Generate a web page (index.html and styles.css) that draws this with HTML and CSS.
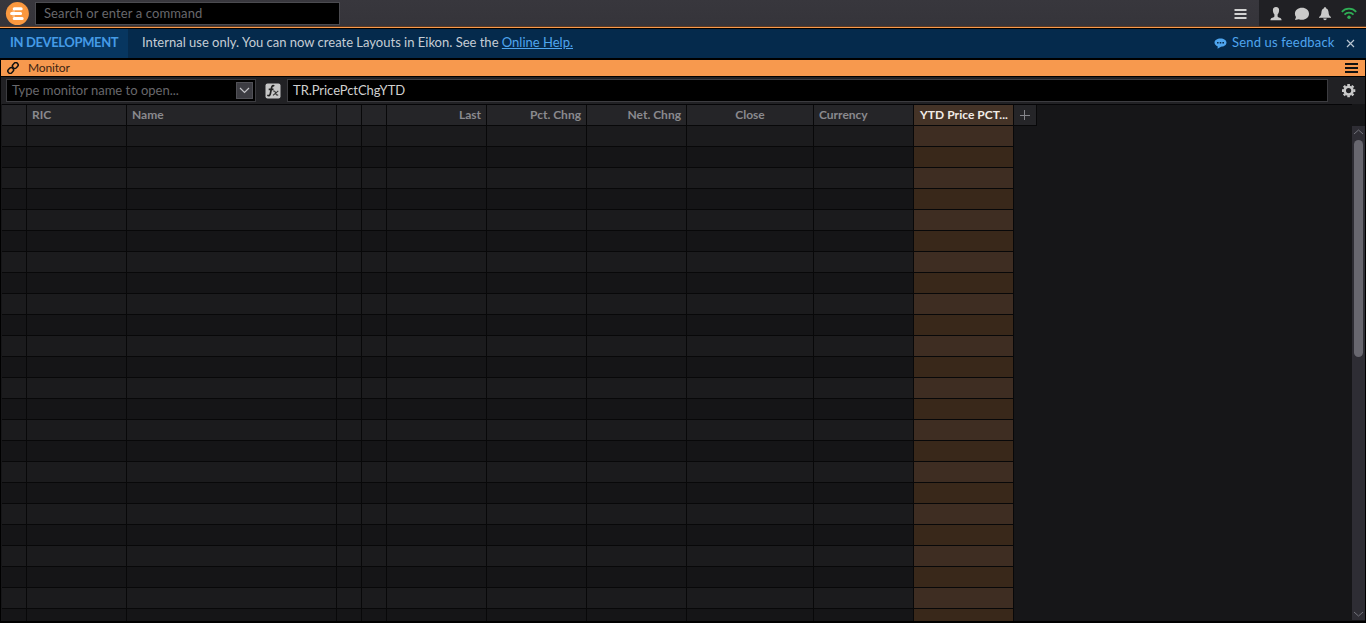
FILE: index.html
```html
<!DOCTYPE html>
<html lang="en">
<head>
<meta charset="utf-8">
<title>Monitor</title>
<link rel="stylesheet" href="styles.css">
</head>
<body>
<div class="app">
  <header class="topbar">
    <svg class="logo" width="24" height="24" viewBox="0 0 24 24"><circle cx="12.400" cy="11.600" r="11.500" fill="#fa983f"/><path d="M9.200 6.800h7M6.600 11.600h9M9.200 16.400h8" stroke="#fff" stroke-width="3" stroke-linecap="round"/><path d="M7.400 8.100h2.500v7H7.400z" fill="#fff" opacity=".35"/></svg>
    <div class="search"><span class="search-text">Search or enter a command</span></div>
    <div class="menu">
      <svg width="13" height="10" viewBox="0 0 13 10"><path d="M.5 1h12M.5 5h12M.5 9h12" stroke="#d2d2d2" stroke-width="2"/></svg>
    </div>
    <div class="status">
      <svg width="12" height="14" viewBox="0 0 12 14"><path d="M6 0C3.8 0 2.8 1.4 2.9 3.4 3 5.3 3.7 6.6 4.4 7.4v2.2C4.2 10.700.4 10.500.4 13.200h11.200C11.600 10.500 7.800 10.700 7.600 9.600V7.400C8.300 6.600 9 5.300 9.100 3.400 9.200 1.400 8.200 0 6 0z" fill="#cacaca"/></svg>
      <svg class="chat" width="16" height="14" viewBox="0 0 16 14"><path d="M8 .8c4 0 7 2.500 7 6s-3 6-7 6c-1.200 0-2.300-.2-3.200-.6L1 12.900l1-2.900C1.300 9 .9 8 .9 6.800.9 3.300 4 .8 8 .8z" fill="#cacaca"/></svg>
      <svg class="bell" width="14" height="14" viewBox="0 0 14 14"><path d="M7 .3c.8 0 1.200.5 1.200 1.100 1.700.6 2.300 2 2.400 4.100.1 2.300.8 3.600 2.400 4.500v.7H1V10c1.600-.9 2.300-2.200 2.400-4.500.1-2.100.7-3.500 2.400-4.100C5.800.8 6.200.3 7 .3zM5.200 11.600h3.600C8.600 12.600 7.900 13.200 7 13.200s-1.600-.6-1.800-1.600z" fill="#cacaca"/></svg>
      <svg class="wifi" width="16" height="13" viewBox="0 0 16 13" fill="none" stroke="#2fae55" stroke-width="1.700"><path d="M.8 4.800C4.800.5 11.200.5 15.200 4.800M3.500 7.600c2.500-2.700 6.500-2.700 9 0"/><circle cx="8" cy="10.200" r="1.700" fill="#2fae55" stroke="none"/></svg>
    </div>
  </header>
  <div class="accent"></div>

  <div class="banner">
    <div class="tag"><span class="tag-text">IN DEVELOPMENT</span></div>
    <p class="notice">Internal use only. You can now create Layouts in Eikon. See the <a href="#">Online Help.</a></p>
    <svg class="bubble" width="13" height="11" viewBox="0 0 13 11"><path d="M6.500.4c3.500 0 6 1.800 6 4.200s-2.500 4.200-5.500 4.200L3.500 10.800l.3-2.400C1.800 7.700.5 6.400.5 4.600.5 2.200 3 .4 6.500.4z" fill="#4fa5ee"/><path d="M3 4h1.600v1.500H3zM5.700 4h1.600v1.500H5.700zM8.400 4H10v1.500H8.400z" fill="#052a4c"/></svg>
    <span class="feedback">Send us feedback</span>
    <svg class="close" width="9" height="9" viewBox="0 0 9 9"><path d="M1 1l7 7M8 1L1 8" stroke="#b9c6d2" stroke-width="1.200"/></svg>
  </div>

  <main class="panel">
    <div class="titlebar">
      <svg class="link" width="12" height="12" viewBox="0 0 12 12" fill="none" stroke="#111" stroke-width="1.500"><rect x="5.300" y="1.200" width="6" height="4.600" rx="2.200" transform="rotate(-45 8.300 3.500)"/><rect x=".7" y="6.200" width="6" height="4.600" rx="2.200" transform="rotate(-45 3.700 8.500)"/></svg>
      <span class="title">Monitor</span>
      <svg class="burger" width="13" height="10" viewBox="0 0 13 10"><path d="M0 1h13M0 5h13M0 9h13" stroke="#111" stroke-width="2"/></svg>
    </div>

    <div class="toolbar">
      <div class="combo"><span class="combo-text">Type monitor name to open...</span><span class="drop"><svg width="11" height="7" viewBox="0 0 11 7"><path d="M1 1l4.500 4.500L10 1" fill="none" stroke="#c4c4c8" stroke-width="1.200"/></svg></span></div>
      <svg class="fx" width="16" height="16" viewBox="0 0 16 16"><rect x=".5" y=".5" width="15" height="15" rx="2" fill="#c7c7c7"/><path d="M9.300 3C7.200 2 6.700 3.800 6.300 6L5.400 10.500C5 12.600 4 13 2.300 12.300M3.700 6.300h4.800" fill="none" stroke="#222" stroke-width="1.700"/><path d="M8.200 8.200c1.600-.8 2 .6 2.500 2s1 2.500 2.500 1.500M13.300 7.900L8 12.400" fill="none" stroke="#333" stroke-width="1.100"/></svg>
      <div class="formula"><span class="formula-text">TR.PricePctChgYTD</span></div>
      <svg class="gear" width="14" height="14" viewBox="0 0 14 14" fill="none" stroke="#cacaca"><circle cx="6.600" cy="6.600" r="3.900" stroke-width="2.600"/><path transform="translate(-.4 -.4)" d="M7 .4v2M7 11.700v2M.4 7h2M11.700 7h2M2.260 2.260l1.400 1.400M10.340 10.340l1.400 1.400M11.740 2.260l-1.400 1.400M3.660 10.340l-1.400 1.400" stroke-width="2.600"/></svg>
    </div>

    <div class="workspace">
      <div class="grid">
        <div class="row head">
          <div></div><div><span>RIC</span></div><div><span>Name</span></div><div></div><div></div>
          <div class="right"><span>Last</span></div><div class="right"><span>Pct. Chng</span></div><div class="right"><span>Net. Chng</span></div>
          <div class="center"><span>Close</span></div><div><span>Currency</span></div><div class="selected"><span>YTD Price PCT...</span></div>
          <div class="add"><svg width="10" height="10" viewBox="0 0 10 10"><path d="M0 5.500h10M4.500 0v10" stroke="#85858a"/></svg></div>
        </div>
        <div class="rows" id="rows"></div>
      </div>
      <div class="scrollbar">
        <svg width="11" height="6" viewBox="0 0 11 6"><path d="M1 5l4.500-4L10 5" fill="none" stroke="#73737b"/></svg>
        <div class="thumb"></div>
        <svg class="down" width="11" height="6" viewBox="0 0 11 6"><path d="M1 1l4.500 4L10 1" fill="none" stroke="#73737b"/></svg>
      </div>
    </div>
  </main>
</div>
<script src="rows.js"></script>
</body>
</html>
```
FILE: styles.css
```css
* { box-sizing: border-box; }
body { margin: 0; background: #000; font-family: "Lato", "Liberation Sans", sans-serif; font-size: 13px; line-height: 16px; }
svg { display: block; flex: none; }
span, p { white-space: nowrap; }
.app { width: 1366px; height: 623px; display: flex; flex-direction: column; overflow: hidden; }

.topbar { height: 26px; flex: none; display: flex; background: linear-gradient(#38373d, #35343a); }
.accent { height: 2px; flex: none; background: #f99a4b; border-top: 1px solid #5a3a26; }
.logo { margin: 2px 6px 0 5px; }
.search { width: 305px; height: 23px; margin-top: 2px; background: #000; border: 1px solid #4b4b50; padding: 2px 8px; color: #68686c; }
.search-text { letter-spacing: .11px; }
.menu { margin-left: auto; width: 25px; padding-top: 9px; }
.status { width: 107px; background: #202024; display: flex; padding: 7px 0 0 11px; }
.chat { margin-left: 12px; }
.bell { margin-left: 8px; }
.wifi { margin-left: 9px; }

.banner { height: 29px; margin-top: 1px; flex: none; display: flex; align-items: flex-start; background: #052a4c; }
.tag { width: 128px; height: 29px; background: #073660; color: #459be6; padding: 5px 0 0 10px; }
.tag-text { font-weight: 700; letter-spacing: -.37px; }
.notice { margin: 5px 0 0 14px; color: #c5cdd5; }
.notice a, .feedback { color: #4fa5ee; }
.bubble { margin: 9px 5px 0 auto; }
.feedback { margin-top: 5px; width: 103px; letter-spacing: .17px; }
.close { margin: 10px 11px 0 11px; }

.panel { flex: 1; min-height: 0; display: flex; flex-direction: column; margin: 2px 1px 2px; }
.titlebar { height: 16px; flex: none; display: flex; align-items: center; background: #f7994e; color: #3d2412; padding: 0 7px 0 6px; }
.title { font-size: 12px; margin-left: 9px; letter-spacing: -.15px; }
.burger { margin-left: auto; }
.toolbar { height: 27px; margin-top: 1px; flex: none; display: flex; align-items: flex-start; background: #212124; }
.combo { width: 250px; height: 23px; margin: 2px 0 0 5px; border: 1px solid #3c3c40; background: #000; display: flex; padding: 2px 2px 0 5px; color: #68686c; }
.drop { margin: 0 0 0 auto; width: 17px; height: 17px; display: flex; align-items: center; justify-content: center; background: #3c3c42; border: 1px solid #515157; }
.fx { margin: 6px 7px 0 9px; }
.formula { width: 1041px; height: 23px; margin: 2px 0 0 -1px; border: 1px solid #3c3c40; background: #000; color: #d0d0d0; padding: 2px 5px; }
.formula-text { letter-spacing: -.05px; }
.gear { margin: 7px 0 0 14px; }

.workspace { flex: 1; min-height: 0; display: flex; background: #161618; padding-left: 1px; }
.grid { flex: 1; border-top: 1px solid #050507; overflow: hidden; }
.row { display: grid; grid-template-columns: 25px 100px 210px 25px 25px 100px 100px 100px 127px 100px 100px 23px; height: 21px; width: 1035px; }
.row > div { border-right: 1px solid #080809; border-bottom: 1px solid #080809; background: #1b1b1d; }
.rows .row:nth-child(even) > div { background: #151517; }
.rows .row > .selected { background: #3e2d22; }
.rows .row:nth-child(even) > .selected { background: #39281a; }
.head > div { background: #252528; color: #8a8a8e; font-size: 12px; font-weight: 700; padding: 2px 5px; }
.head > .right { text-align: right; }
.head > .center { text-align: center; }
.head > .selected { background: #443327; color: #f1ebe6; padding-left: 6px; letter-spacing: .05px; }
.head > .add { padding: 5px 0 0 6px; }
.scrollbar { width: 13px; margin: 22px 0 1px; background: #2e2d34; padding-top: 3px; display: flex; flex-direction: column; align-items: center; }
.thumb { width: 9px; height: 217px; flex: none; margin-top: 5px; border-radius: 5px; background: #68676f; }
.down { margin: auto 0 3px; }
```
FILE: rows.js
```js
const rows = document.getElementById('rows');
for (let r = 0; r < 24; r++) {
  const row = document.createElement('div');
  row.className = 'row';
  for (let c = 0; c < 11; c++) {
    const cell = document.createElement('div');
    if (c === 10) cell.className = 'selected';
    row.appendChild(cell);
  }
  rows.appendChild(row);
}
```
